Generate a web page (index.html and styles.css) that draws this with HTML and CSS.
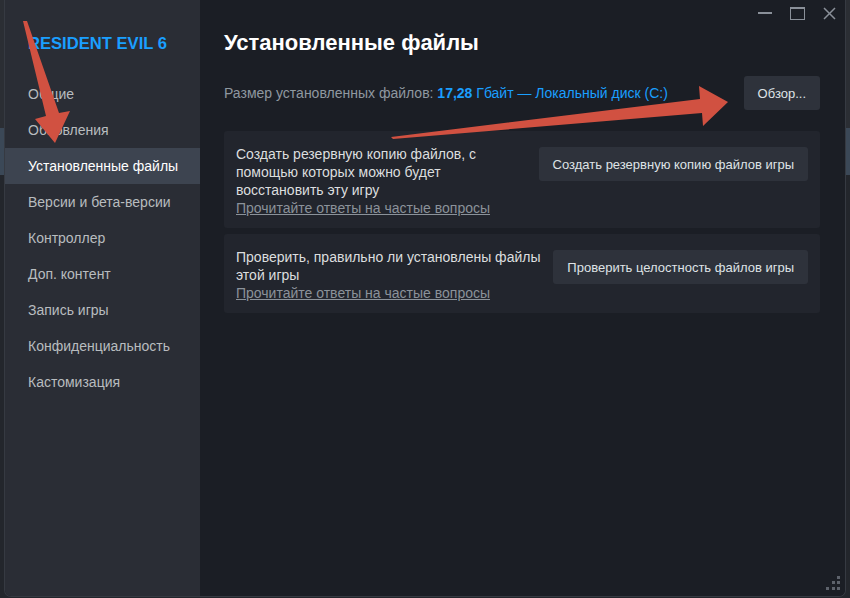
FILE: index.html
```html
<!DOCTYPE html>
<html lang="ru">
  <head>
    <meta charset="UTF-8" />
    <meta name="viewport" content="width=device-width, initial-scale=1.0" />
    <title>Свойства — RESIDENT EVIL 6</title>
    <link rel="stylesheet" href="styles.css">
  </head>
  <body>
    <div class="desktop">
      <div class="window">
        <!-- левая колонка с разделами -->
        <nav class="sidebar">
          <div class="game-title">RESIDENT EVIL 6</div>
          <div class="nav-item">Общие</div>
          <div class="nav-item">Обновления</div>
          <div class="nav-item active">Установленные файлы</div>
          <div class="nav-item">Версии и бета-версии</div>
          <div class="nav-item">Контроллер</div>
          <div class="nav-item">Доп. контент</div>
          <div class="nav-item">Запись игры</div>
          <div class="nav-item">Конфиденциальность</div>
          <div class="nav-item">Кастомизация</div>
        </nav>

        <main class="content">
          <div class="window-controls">
            <span class="ctrl">
              <svg width="14" height="14" viewBox="0 0 14 14"><rect x="0" y="6" width="14" height="2" fill="#8a9099"/></svg>
            </span>
            <span class="ctrl">
              <svg width="15" height="13" viewBox="0 0 15 13"><rect x="0.5" y="0.5" width="14" height="12" fill="none" stroke="#8a9099"/><rect x="0" y="0" width="15" height="2" fill="#8a9099"/></svg>
            </span>
            <span class="ctrl">
              <svg width="13" height="13" viewBox="0 0 13 13"><path d="M1 1 L12 12 M12 1 L1 12" stroke="#8a9099" stroke-width="1.5"/></svg>
            </span>
          </div>

          <h1 class="page-title">Установленные файлы</h1>

          <div class="size-row">
            <div class="size-info">
              Размер установленных файлов:
              <span class="accent"><b>17,28</b> Гбайт — Локальный диск (C:)</span>
            </div>
            <button class="btn">Обзор...</button>
          </div>

          <div class="card">
            <div class="card-text">
              Создать резервную копию файлов, с помощью которых можно будет восстановить эту игру
              <a class="faq" href="#">Прочитайте ответы на частые вопросы</a>
            </div>
            <button class="btn">Создать резервную копию файлов игры</button>
          </div>

          <div class="card">
            <div class="card-text">
              Проверить, правильно ли установлены файлы этой игры
              <a class="faq" href="#">Прочитайте ответы на частые вопросы</a>
            </div>
            <button class="btn">Проверить целостность файлов игры</button>
          </div>
        </main>

        <!-- уголок для изменения размера -->
        <svg class="grip" width="15" height="15" viewBox="0 0 15 15" fill="#5d626b">
          <rect x="11" y="0" width="3" height="3"/>
          <rect x="6" y="5" width="3" height="3"/>
          <rect x="11" y="5" width="3" height="3"/>
          <rect x="0" y="11" width="3" height="3"/>
          <rect x="6" y="11" width="3" height="3"/>
          <rect x="11" y="11" width="3" height="3"/>
        </svg>
      </div>
    </div>

    <!-- красные стрелки-подсказки поверх окна -->
    <svg class="arrows" width="850" height="598" viewBox="0 0 850 598">
      <polygon fill="#d15141" points="23,21 27,21 59,113 70,111 55,143 35,119 46,116" />
      <polygon fill="#d15141" points="391,137 700,99 699,86 728,102 703,126 702,113 393,139" />
    </svg>
  </body>
</html>
```

FILE: styles.css
```css
body {
  margin: 0;
  padding: 0;
  width: 850px;
  height: 598px;
  overflow: hidden;
  font-family: "Liberation Sans", Arial, sans-serif;
  background: linear-gradient(
    to bottom,
    #2b2e34 0px,
    #2b2e34 128px,
    #3b4857 128px,
    #3b4857 175px,
    #23262c 175px
  );
  position: relative;
}

.desktop {
  display: flex;
  height: 598px;
  padding-left: 4px;
}

.window {
  position: relative;
  display: flex;
  width: 842px;
  height: 597px;
  box-sizing: border-box;
  border: 1px solid #363a42;
  border-top: none;
  border-radius: 0 0 7px 7px;
  overflow: hidden;
  background: #1b1e25;
}

.sidebar {
  width: 195px;
  flex-shrink: 0;
  background: #2a2d35;
  padding-top: 34px;
}

.game-title {
  height: 20px;
  line-height: 20px;
  padding-left: 23px;
  margin-bottom: 22px;
  color: #1a9fff;
  font-size: 16.6px;
  font-weight: bold;
}

.nav-item {
  height: 36px;
  line-height: 36px;
  padding-left: 23px;
  font-size: 14px;
  color: #b8bcbf;
}

.nav-item.active {
  background: #3d4450;
  color: #ffffff;
}

.content {
  flex: 1;
  padding: 0 25px 0 24px;
  background: #1b1e25;
}

.window-controls {
  display: flex;
  justify-content: flex-end;
  height: 26px;
  margin-right: -25px;
}

.ctrl {
  width: 32px;
  display: flex;
  align-items: center;
  justify-content: center;
}

.page-title {
  margin: 4px 0 0 0;
  height: 26px;
  line-height: 26px;
  font-size: 22px;
  font-weight: bold;
  color: #ffffff;
}

.size-row {
  display: flex;
  align-items: center;
  justify-content: space-between;
  margin-top: 20px;
  height: 34px;
}

.size-info {
  font-size: 14px;
  color: #8f98a0;
}

.accent {
  color: #1a9fff;
}

.btn {
  height: 34px;
  padding: 0 14px;
  border: none;
  border-radius: 3px;
  background: #2e323b;
  color: #dfe3e6;
  font-family: inherit;
  font-size: 13px;
  white-space: nowrap;
  flex-shrink: 0;
}

.card {
  display: flex;
  align-items: flex-start;
  gap: 12px;
  margin-top: 6px;
  padding: 14px 12px 11px 12px;
  background: #22252d;
  border-radius: 3px;
}

.size-row + .card {
  margin-top: 21px;
}

.card .btn {
  margin-top: 2px;
}

.card-text {
  flex: 1;
  font-size: 14px;
  line-height: 18px;
  color: #dcdedf;
}

.faq {
  display: block;
  color: #8b929a;
  text-decoration: underline;
}

.grip {
  position: absolute;
  right: 4px;
  bottom: 5px;
}

.arrows {
  position: absolute;
  left: 0;
  top: 0;
  pointer-events: none;
}
```
